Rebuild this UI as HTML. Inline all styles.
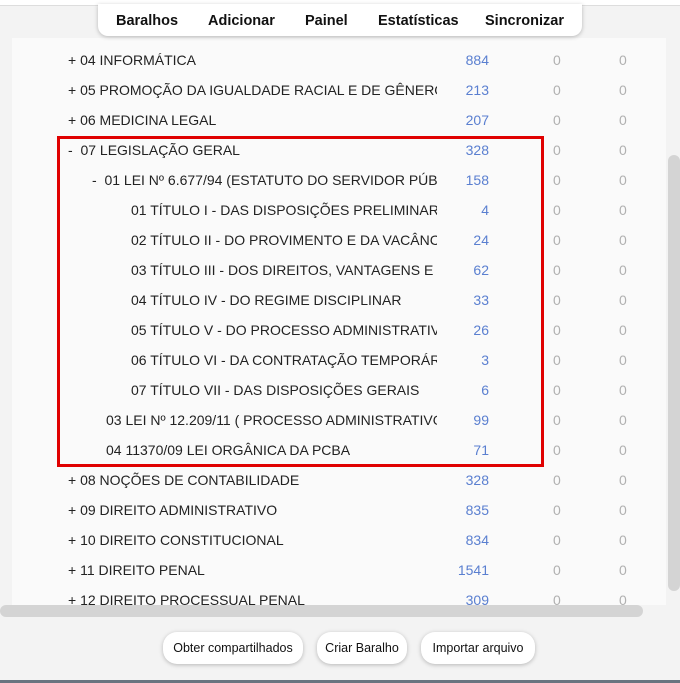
<!DOCTYPE html>
<html><head><meta charset="utf-8"><style>
html,body{margin:0;padding:0;}
body{width:680px;height:683px;background:#f3f3f3;position:relative;overflow:hidden;font-family:"Liberation Sans",sans-serif;}
.top{position:absolute;left:0;top:0;width:680px;height:5px;background:#fff;border-bottom:1px solid #ddd;}
.panel{position:absolute;left:12px;top:38px;width:654px;height:567px;background:#fafafa;overflow:hidden;}
.nav{position:absolute;left:98px;top:4px;width:484px;height:32px;background:#fff;border-radius:0 0 10px 10px;box-shadow:0 1px 4px rgba(0,0,0,.25);font-weight:bold;font-size:14.5px;color:#111;}
.nav span{position:absolute;top:9px;}
.row{position:absolute;left:0;width:654px;height:30px;font-size:14px;color:#222;}
.nm{position:absolute;top:7px;white-space:nowrap;overflow:hidden;}
.n{position:absolute;right:177px;top:7px;color:#5a7fd0;}
.z1,.z2{position:absolute;top:7px;color:#b0b0b0;}
.z1{left:541px}.z2{left:607px}
.red{position:absolute;left:57px;top:136px;width:481px;height:325px;border:3px solid #e00000;}
.hs{position:absolute;left:0;top:605px;width:643px;height:12px;background:#d4d4d4;border-radius:6px;}
.vs{position:absolute;left:668px;top:155px;width:12px;height:436px;background:#d4d4d4;border-radius:6px;}
.btn{position:absolute;top:632px;height:32px;background:#fff;border-radius:14px;box-shadow:0 1px 4px rgba(0,0,0,.25);font-size:12.5px;color:#111;text-align:center;line-height:33px;}
.bot{position:absolute;left:0;top:680px;width:680px;height:3px;background:#6a7480;}
</style></head><body>
<div class="top"></div>
<div class="panel">
<div class="row" style="top:7px"><div class="nm" style="left:56px;width:370px">+ 04 INFORMÁTICA</div><div class="n">884</div><div class="z1">0</div><div class="z2">0</div></div>
<div class="row" style="top:37px"><div class="nm" style="left:56px;width:369px">+ 05 PROMOÇÃO DA IGUALDADE RACIAL E DE GÊNERO</div><div class="n">213</div><div class="z1">0</div><div class="z2">0</div></div>
<div class="row" style="top:67px"><div class="nm" style="left:56px;width:370px">+ 06 MEDICINA LEGAL</div><div class="n">207</div><div class="z1">0</div><div class="z2">0</div></div>
<div class="row" style="top:97px"><div class="nm" style="left:56px;width:370px">-&nbsp; 07 LEGISLAÇÃO GERAL</div><div class="n">328</div><div class="z1">0</div><div class="z2">0</div></div>
<div class="row" style="top:127px"><div class="nm" style="left:80px;width:345px">-&nbsp; 01 LEI Nº 6.677/94 (ESTATUTO DO SERVIDOR PÚBLICO)</div><div class="n">158</div><div class="z1">0</div><div class="z2">0</div></div>
<div class="row" style="top:157px"><div class="nm" style="left:119px;width:306px">01 TÍTULO I - DAS DISPOSIÇÕES PRELIMINARES</div><div class="n">4</div><div class="z1">0</div><div class="z2">0</div></div>
<div class="row" style="top:187px"><div class="nm" style="left:119px;width:306px">02 TÍTULO II - DO PROVIMENTO E DA VACÂNCIA</div><div class="n">24</div><div class="z1">0</div><div class="z2">0</div></div>
<div class="row" style="top:217px"><div class="nm" style="left:119px;width:306px">03 TÍTULO III - DOS DIREITOS, VANTAGENS E BENEFÍCIOS</div><div class="n">62</div><div class="z1">0</div><div class="z2">0</div></div>
<div class="row" style="top:247px"><div class="nm" style="left:119px;width:306px">04 TÍTULO IV - DO REGIME DISCIPLINAR</div><div class="n">33</div><div class="z1">0</div><div class="z2">0</div></div>
<div class="row" style="top:277px"><div class="nm" style="left:119px;width:306px">05 TÍTULO V - DO PROCESSO ADMINISTRATIVO</div><div class="n">26</div><div class="z1">0</div><div class="z2">0</div></div>
<div class="row" style="top:307px"><div class="nm" style="left:119px;width:306px">06 TÍTULO VI - DA CONTRATAÇÃO TEMPORÁRIA</div><div class="n">3</div><div class="z1">0</div><div class="z2">0</div></div>
<div class="row" style="top:337px"><div class="nm" style="left:119px;width:306px">07 TÍTULO VII - DAS DISPOSIÇÕES GERAIS</div><div class="n">6</div><div class="z1">0</div><div class="z2">0</div></div>
<div class="row" style="top:367px"><div class="nm" style="left:94px;width:331px">03 LEI Nº 12.209/11 ( PROCESSO ADMINISTRATIVO )</div><div class="n">99</div><div class="z1">0</div><div class="z2">0</div></div>
<div class="row" style="top:397px"><div class="nm" style="left:94px;width:331px">04 11370/09 LEI ORGÂNICA DA PCBA</div><div class="n">71</div><div class="z1">0</div><div class="z2">0</div></div>
<div class="row" style="top:427px"><div class="nm" style="left:56px;width:370px">+ 08 NOÇÕES DE CONTABILIDADE</div><div class="n">328</div><div class="z1">0</div><div class="z2">0</div></div>
<div class="row" style="top:457px"><div class="nm" style="left:56px;width:370px">+ 09 DIREITO ADMINISTRATIVO</div><div class="n">835</div><div class="z1">0</div><div class="z2">0</div></div>
<div class="row" style="top:487px"><div class="nm" style="left:56px;width:370px">+ 10 DIREITO CONSTITUCIONAL</div><div class="n">834</div><div class="z1">0</div><div class="z2">0</div></div>
<div class="row" style="top:517px"><div class="nm" style="left:56px;width:370px">+ 11 DIREITO PENAL</div><div class="n">1541</div><div class="z1">0</div><div class="z2">0</div></div>
<div class="row" style="top:547px"><div class="nm" style="left:56px;width:370px">+ 12 DIREITO PROCESSUAL PENAL</div><div class="n">309</div><div class="z1">0</div><div class="z2">0</div></div>
</div>
<div class="red"></div>
<div class="nav"><span style="left:18px">Baralhos</span><span style="left:110px">Adicionar</span><span style="left:207px">Painel</span><span style="left:280px">Estatísticas</span><span style="left:387px">Sincronizar</span></div>
<div class="hs"></div>
<div class="vs"></div>
<div class="btn" style="left:163px;width:140px">Obter compartilhados</div>
<div class="btn" style="left:317px;width:90px">Criar Baralho</div>
<div class="btn" style="left:421px;width:114px">Importar arquivo</div>
<div class="bot"></div>
</body></html>
